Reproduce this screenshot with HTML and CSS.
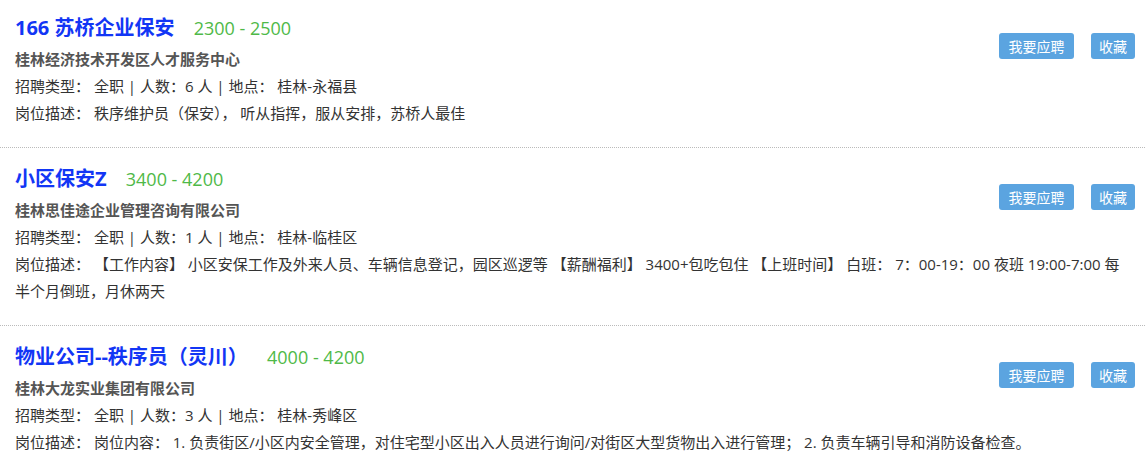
FILE: index.html
```html
<!DOCTYPE html>
<html lang="zh-CN">
<head>
    <meta charset="UTF-8">
    <meta name="viewport" content="width=device-width, initial-scale=1.0">
    <title>招聘信息</title>
    <link rel="stylesheet" href="styles.css">
</head>
<body>
    <div class="job-list">
        <div class="job-item">
            <div class="job-title">
                <a href="#">166 苏桥企业保安</a>
                <span class="salary">2300 - 2500</span>
            </div>
            <div class="company">桂林经济技术开发区人才服务中心</div>
            <div class="job-actions">
                <button class="btn btn-apply">我要应聘</button>
                <button class="btn">收藏</button>
            </div>
            <div class="job-line">招聘类型： 全职 | 人数：6 人 | 地点： 桂林-永福县</div>
            <div class="job-line">岗位描述： 秩序维护员（保安）， 听从指挥，服从安排，苏桥人最佳</div>
        </div>

        <div class="job-item">
            <div class="job-title">
                <a href="#">小区保安Z</a>
                <span class="salary">3400 - 4200</span>
            </div>
            <div class="company">桂林思佳途企业管理咨询有限公司</div>
            <div class="job-actions">
                <button class="btn btn-apply">我要应聘</button>
                <button class="btn">收藏</button>
            </div>
            <div class="job-line">招聘类型： 全职 | 人数：1 人 | 地点： 桂林-临桂区</div>
            <div class="job-line">岗位描述： 【工作内容】 小区安保工作及外来人员、车辆信息登记，园区巡逻等 【薪酬福利】 3400+包吃包住 【上班时间】 白班： 7：00-19：00 夜班 19:00-7:00 每<br>半个月倒班，月休两天</div>
        </div>

        <div class="job-item">
            <div class="job-title">
                <a href="#">物业公司--秩序员（灵川）</a>
                <span class="salary">4000 - 4200</span>
            </div>
            <div class="company">桂林大龙实业集团有限公司</div>
            <div class="job-actions">
                <button class="btn btn-apply">我要应聘</button>
                <button class="btn">收藏</button>
            </div>
            <div class="job-line">招聘类型： 全职 | 人数：3 人 | 地点： 桂林-秀峰区</div>
            <div class="job-line">岗位描述： 岗位内容： 1. 负责街区/小区内安全管理，对住宅型小区出入人员进行询问/对街区大型货物出入进行管理； 2. 负责车辆引导和消防设备检查。</div>
        </div>
    </div>
</body>
</html>
```

FILE: styles.css
```css
body {
    margin: 0;
    font-family: "Open Sans", "Noto Sans CJK SC", sans-serif;
    color: #333;
    background: #fff;
}
.job-item {
    display: grid;
    grid-template-columns: 1fr auto;
    padding: 12px 10px 20px 15px;
    margin-bottom: 3px;
    border-bottom: 1px dotted #bbb;
}
.job-item:last-child {
    border-bottom: none;
}
.job-title {
    grid-column: 1;
    line-height: 32px;
}
.job-title a {
    font-size: 20px;
    font-weight: bold;
    color: #1236f5;
    text-decoration: none;
}
.salary {
    font-size: 18px;
    color: #4fb948;
    margin-left: 15px;
}
.company {
    grid-column: 1;
    font-size: 15px;
    font-weight: bold;
    color: #555;
    line-height: 28px;
}
.job-actions {
    grid-column: 2;
    grid-row: 1 / 3;
    align-self: start;
    display: flex;
    gap: 17px;
    margin-top: 21px;
}
.job-line {
    grid-column: 1 / -1;
    font-size: 15px;
    line-height: 27px;
}
.btn {
    height: 26px;
    padding: 0 8px;
    border: none;
    border-radius: 3px;
    background: #5ba4e0;
    color: #fff;
    font-family: inherit;
    font-size: 14px;
    cursor: pointer;
}
.btn-apply {
    padding: 0 9.5px;
}
```
